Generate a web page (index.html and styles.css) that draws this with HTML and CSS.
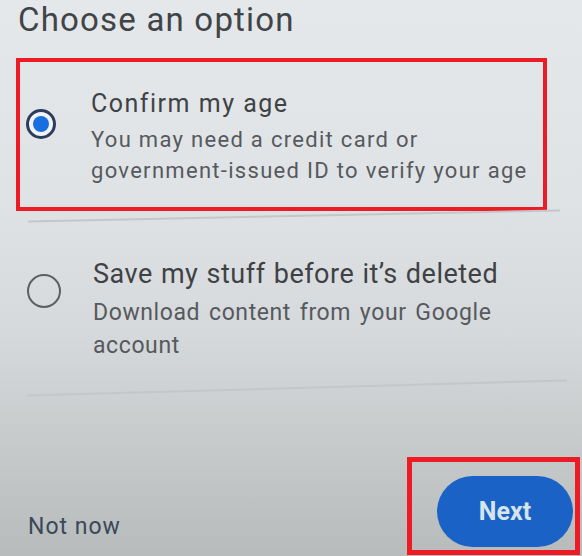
FILE: index.html
```html
<!DOCTYPE html>
<html lang="en">
<head>
  <meta charset="UTF-8">
  <meta name="viewport" content="width=device-width, initial-scale=1.0">
  <title>Choose an option</title>
  <link rel="stylesheet" href="styles.css">
</head>
<body>
  <div class="screen">
    <h1 class="title">Choose an option</h1>

    <div class="option option-selected">
      <span class="radio radio-on"><span class="radio-dot"></span></span>
      <div class="option-text">
        <div class="option-title">Confirm my age</div>
        <div class="option-desc">You may need a credit card or<br>government-issued ID to verify your age</div>
      </div>
    </div>
    <div class="divider divider-top"></div>

    <div class="option option-plain">
      <span class="radio radio-off"></span>
      <div class="option-text">
        <div class="option-title">Save my stuff before it’s deleted</div>
        <div class="option-desc">Download content from your Google<br>account</div>
      </div>
    </div>
    <div class="divider divider-bottom"></div>

    <div class="footer">
      <a class="not-now">Not now</a>
      <div class="next-box">
        <button class="next">Next</button>
      </div>
    </div>
  </div>
</body>
</html>
```

FILE: styles.css
```css
html, body {
  margin: 0;
  padding: 0;
}

body {
  width: 582px;
  height: 556px;
  overflow: hidden;
  font-family: Roboto, "Noto Sans", sans-serif;
  background: linear-gradient(to bottom, #e5e8ea 0%, #e0e3e5 35%, #d6d9db 60%, #c6cacb 80%, #b7bbbb 100%);
}

.screen {
  display: flex;
  flex-direction: column;
}

.title {
  margin: 3px 0 0 18px;
  font-size: 33px;
  line-height: 34px;
  font-weight: 400;
  letter-spacing: 1.2px;
  color: #414447;
}

.option {
  display: flex;
  align-items: flex-start;
}

.option-selected {
  box-sizing: border-box;
  width: 531px;
  margin: 21px 0 0 16px;
  padding: 27px 0 21px 6px;
  border: 4px solid #ed1c24;
}

.option-plain {
  padding: 41px 0 25px 27px;
}

.radio {
  box-sizing: border-box;
  display: flex;
  align-items: center;
  justify-content: center;
  flex-shrink: 0;
  border-radius: 50%;
}

.radio-on {
  width: 30px;
  height: 30px;
  margin-top: 20px;
  margin-right: 35px;
  border: 3px solid #2d3c5e;
  background: #f1f4f7;
}

.radio-dot {
  width: 16px;
  height: 16px;
  border-radius: 50%;
  background: #1a6fe0;
}

.radio-off {
  width: 34px;
  height: 34px;
  margin-top: 16px;
  margin-right: 32px;
  border: 2.5px solid #5c6063;
}

.option-selected .option-title {
  font-size: 25px;
  line-height: 30px;
  letter-spacing: 1.5px;
  color: #3f4245;
}

.option-selected .option-desc {
  margin-top: 5px;
  font-size: 22px;
  line-height: 31px;
  letter-spacing: 1.3px;
  color: #56595d;
}

.option-plain .option-title {
  font-size: 27px;
  line-height: 32px;
  letter-spacing: 0.5px;
  word-spacing: 1px;
  color: #3f4245;
}

.option-plain .option-desc {
  margin-top: 6px;
  font-size: 23px;
  line-height: 33px;
  letter-spacing: 0.6px;
  word-spacing: 2.5px;
  color: #56595d;
}

.divider {
  height: 1.5px;
  background: #c3c7c9;
}

.divider-top {
  width: 532px;
  margin: 4px 0 0 28px;
  transform: rotate(-1.2deg);
}

.divider-bottom {
  width: 540px;
  margin-left: 27px;
  transform: rotate(-1.6deg);
}

.footer {
  display: flex;
  justify-content: space-between;
  align-items: flex-end;
  height: 98px;
  margin-top: 69px;
  padding-left: 28px;
  padding-right: 2px;
}

.not-now {
  margin-bottom: 15px;
  font-size: 23px;
  line-height: 26px;
  letter-spacing: 1px;
  color: #3a4859;
}

.next-box {
  box-sizing: border-box;
  width: 173px;
  height: 98px;
  padding: 14px 0 0 25px;
  border: 5px solid #ed1c24;
}

.next {
  width: 136px;
  height: 71px;
  border: none;
  border-radius: 36px;
  background: #1b62c6;
  color: #d6e4ec;
  font-family: Roboto, "Noto Sans", sans-serif;
  font-size: 25px;
  font-weight: 700;
  cursor: pointer;
}
```
